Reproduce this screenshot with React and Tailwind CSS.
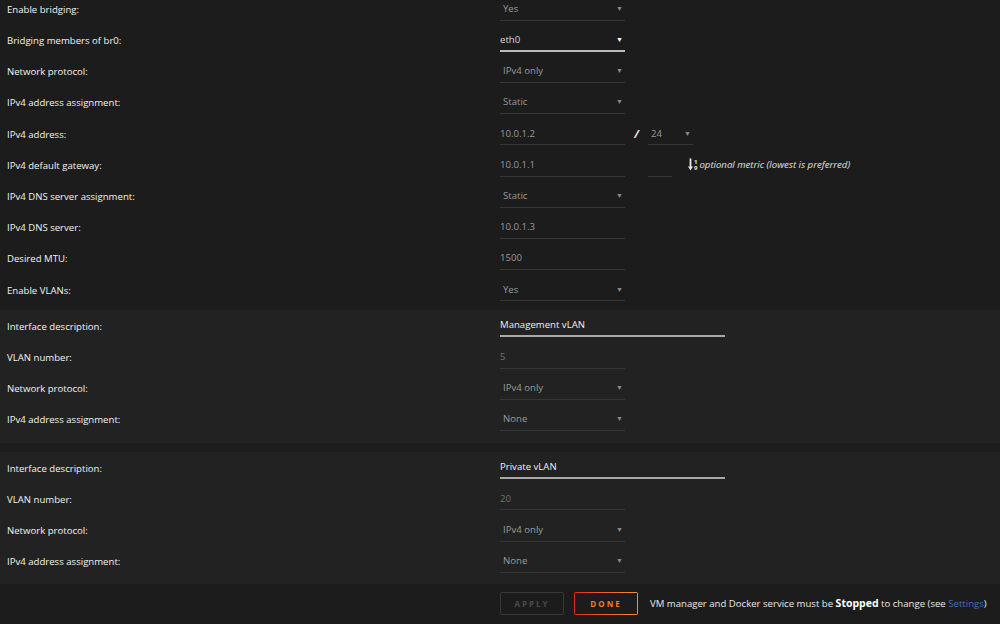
import React from "react";

const font = { fontFamily: '"Open Sans", "Liberation Sans", sans-serif' };

const Row = ({ label, children }) => (
  <div className="flex items-center h-[31.2px]">
    <div className="w-[500px] pl-[7px] pt-[3px] text-[9.6px] text-[#f2f2f2]">{label}</div>
    <div className="flex items-center">{children}</div>
  </div>
);

const Select = ({ value, width = "w-[125px]", bright }) => (
  <div
    className={`${width} h-[24px] pt-[2px] flex items-center justify-between border-b ${
      bright ? "border-b-2 border-[#bbbbbb] pl-0" : "border-[#363636] pl-[3px]"
    } pr-[2px]`}
  >
    <span className={`text-[9.6px] ${bright ? "text-[#d8d8d8]" : "text-[#9a9a9a]"}`}>{value}</span>
    <span className={`text-[7px] ${bright ? "text-white" : "text-[#8a8a8a]"}`}>▼</span>
  </div>
);

const Input = ({ value, width = "w-[125px]", strong, dim }) => (
  <div
    className={`${width} h-[24px] pt-[2px] flex items-center ${
      strong ? "border-b-2 border-[#a8a8a8]" : "border-b border-[#363636]"
    }`}
  >
    <span
      className={`text-[9.6px] ${
        strong ? "text-[#f0f0f0]" : dim ? "text-[#707070]" : "text-[#9a9a9a]"
      }`}
    >
      {value}
    </span>
  </div>
);

// arrow with 1 over 9, like the old sort-numeric icon
const SortNumeric = () => (
  <span className="ml-[16px] inline-flex items-center h-[13px] text-[#e6e6e6]">
    <svg width="5" height="13" viewBox="0 0 5 13" fill="currentColor">
      <rect x="1.6" y="0.5" width="1.8" height="9" />
      <path d="M0 8.5 L5 8.5 L2.5 12.5 Z" />
    </svg>
    <span className="flex flex-col ml-[1px] text-[6px] leading-[6px] font-bold">
      <span>1</span>
      <span>9</span>
    </span>
  </span>
);

const Vlan = ({ desc, num }) => (
  <div className="bg-[#222222] pb-[8px]">
    <Row label="Interface description:">
      <Input value={desc} width="w-[225px]" strong />
    </Row>
    <Row label="VLAN number:">
      <Input value={num} dim />
    </Row>
    <Row label="Network protocol:">
      <Select value="IPv4 only" />
    </Row>
    <Row label="IPv4 address assignment:">
      <Select value="None" />
    </Row>
  </div>
);

export default function App() {
  return (
    <div className="w-[1000px] h-[624px] overflow-hidden bg-[#1c1c1c]" style={font}>
      <div className="-mt-[7px] pb-[5px]">
        <Row label="Enable bridging:">
          <Select value="Yes" />
        </Row>
        <Row label="Bridging members of br0:">
          <Select value="eth0" bright />
        </Row>
        <Row label="Network protocol:">
          <Select value="IPv4 only" />
        </Row>
        <Row label="IPv4 address assignment:">
          <Select value="Static" />
        </Row>
        <Row label="IPv4 address:">
          <Input value="10.0.1.2" />
          <span className="w-[23px] pt-[2px] text-center text-[11px] italic font-bold text-[#e8e8e8]">/</span>
          <Select value="24" width="w-[45px]" />
        </Row>
        <Row label="IPv4 default gateway:">
          <Input value="10.0.1.1" />
          <div className="w-[23px]" />
          <div className="w-[24px] h-[24px] border-b border-[#363636]" />
          <SortNumeric />
          <span className="ml-[2px] pt-[2px] text-[9.6px] italic text-[#e0e0e0]">
            optional metric (lowest is preferred)
          </span>
        </Row>
        <Row label="IPv4 DNS server assignment:">
          <Select value="Static" />
        </Row>
        <Row label="IPv4 DNS server:">
          <Input value="10.0.1.3" />
        </Row>
        <Row label="Desired MTU:">
          <Input value="1500" />
        </Row>
        <Row label="Enable VLANs:">
          <Select value="Yes" />
        </Row>
      </div>
      <Vlan desc="Management vLAN" num="5" />
      <div className="h-[9px]" />
      <Vlan desc="Private vLAN" num="20" />
      <div className="flex items-center h-[39px] pl-[500px] whitespace-nowrap">
        <div className="w-[64px] h-[23px] flex items-center justify-center border border-[#383838] rounded-[2px] text-[8px] font-bold tracking-[2px] text-[#4a4a4a]">
          APPLY
        </div>
        <div className="ml-[10px] w-[64px] h-[23px] p-px rounded-[2px] bg-gradient-to-r from-[#e22828] to-[#ff8c2f]">
          <div className="w-full h-full bg-[#1c1c1c] flex items-center justify-center text-[8px] font-bold tracking-[2px] text-[#f27a2c]">
            DONE
          </div>
        </div>
        <div className="ml-[12px] text-[9.6px] text-[#e8e8e8]">
          VM manager and Docker service must be{" "}
          <span className="font-bold text-white text-[10.5px]">Stopped</span> to change (see{" "}
          <span className="text-[#486dba]">Settings</span>)
        </div>
      </div>
    </div>
  );
}
